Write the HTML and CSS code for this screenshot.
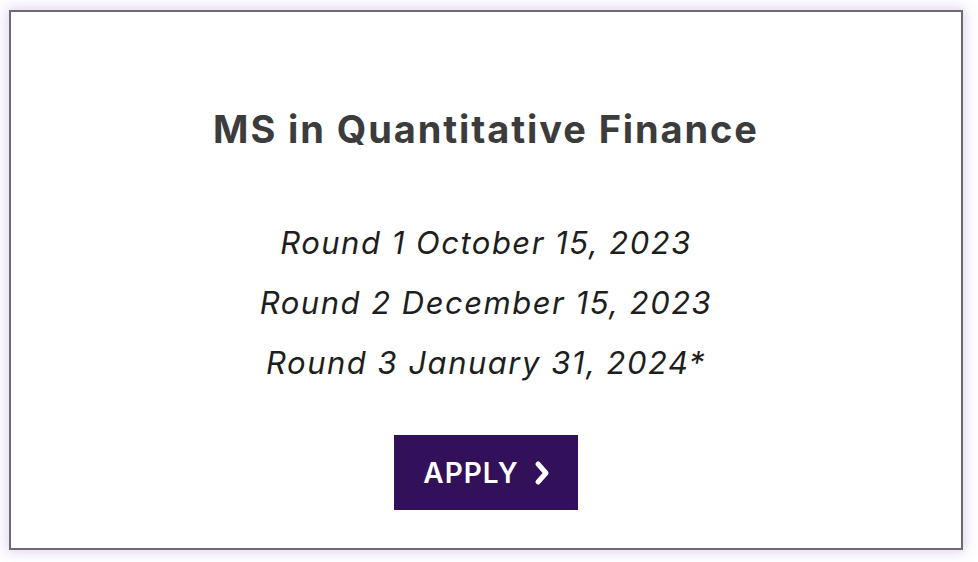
FILE: index.html
```html
<!DOCTYPE html>
<html>
<head>
<meta charset="utf-8">
<link rel="stylesheet" href="styles.css">
</head>
<body>
<div class="card">
  <h2 class="title">MS in Quantitative Finance</h2>
  <div class="rounds">
    <p class="round">Round 1 October 15, 2023</p>
    <p class="round">Round 2 December 15, 2023</p>
    <p class="round">Round 3 January 31, 2024*</p>
  </div>
  <a class="apply" href="#">APPLY
    <svg class="chev" width="18" height="26" viewBox="0 0 18 26"><path d="M5 4 L13 13 L5 22" fill="none" stroke="#fff" stroke-width="5" stroke-linecap="round" stroke-linejoin="round"/></svg>
  </a>
</div>
</body>
</html>
```
FILE: styles.css
```css
html, body { margin: 0; padding: 0; background: #fff; }
body { padding: 10px 15px 12px 9px; font-family: Inter, "Noto Sans", sans-serif; }
.card {
  box-sizing: border-box;
  width: 954px;
  height: 540px;
  border: 2px solid #6e6b72;
  box-shadow: 0 0 12px 2px rgba(170, 130, 210, 0.35);
  background: #fff;
  display: flex;
  flex-direction: column;
  align-items: center;
  padding-top: 95px;
}
.title {
  margin: 0;
  font-size: 38px;
  line-height: 44px;
  font-weight: 700;
  color: #3c3c3c;
  letter-spacing: 1.9px;
}
.rounds { margin-top: 62px; display: flex; flex-direction: column; align-items: center; }
.round {
  margin: 0;
  font-size: 31px;
  line-height: 60px;
  font-style: italic;
  font-weight: 400;
  color: #1e1e1e;
  letter-spacing: 1.5px;
}
.apply {
  margin-top: 42px;
  width: 184px;
  height: 75px;
  box-sizing: border-box;
  background: #33105a;
  color: #fff;
  text-decoration: none;
  display: flex;
  align-items: center;
  justify-content: center;
  gap: 14px;
  font-size: 28px;
  font-weight: 600;
  letter-spacing: 1px;
  padding-left: 2px;
}
.chev { display: block; }
```
